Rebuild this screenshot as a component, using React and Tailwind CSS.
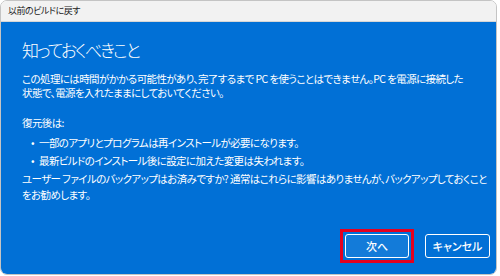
import React from 'react';

const jp = "font-['Noto_Sans_CJK_JP','Noto_Sans',sans-serif] [font-feature-settings:'palt']";

export default function App() {
  return (
    <div className={`w-[500px] h-[276px] bg-white ${jp}`}>
      <div className="w-[497px] h-[275px] flex flex-col border border-[#c4c4c4] rounded-[7px] overflow-hidden">
        <div className="h-[21px] bg-[#f2f2f2] flex items-center pl-[7px] text-[9px] tracking-[-0.5px] text-[#1b1b1b] border-b border-[#d6d6d6]">
          以前のビルドに戻す
        </div>
        <div className="flex-1 bg-[#0170d6] text-white pl-[21px] pr-[6px] flex flex-col text-[10.5px] tracking-[-0.6px] whitespace-nowrap">
          <h1 className="mt-[16px] text-[17px] leading-[24px] font-light tracking-[-2px]">知っておくべきこと</h1>
          <p className="mt-[10px] leading-[14px]">
            この処理には時間がかかる可能性があり、完了するまで PC を使うことはできません。PC を電源に接続した<br />
            状態で、電源を入れたままにしておいてください。
          </p>
          <p className="mt-[16px] leading-[14px]">復元後は:</p>
          <ul className="mt-[4px] leading-[18px] pl-[9px]">
            <li className="flex gap-[5px]"><span>•</span><span>一部のアプリとプログラムは再インストールが必要になります。</span></li>
            <li className="flex gap-[5px]"><span>•</span><span>最新ビルドのインストール後に設定に加えた変更は失われます。</span></li>
          </ul>
          <p className="mt-[1px] leading-[16px]">
            ユーザー ファイルのバックアップはお済みですか? 通常はこれらに影響はありませんが、バックアップしておくこと<br />
            をお勧めします。
          </p>
          <div className="mt-auto mb-[16px] flex justify-end gap-[16px] tracking-normal">
            <div className="relative">
              <button className="w-[64px] h-[24px] rounded-[3px] border border-white bg-[#137bd9] text-[11px] font-medium text-white">次へ</button>
              <div className="absolute -inset-[5px] border-[3px] border-[#e5001e]"></div>
            </div>
            <button className="w-[65px] h-[24px] rounded-[3px] border border-white bg-[#0170d6] text-[11px] font-medium text-white">キャンセル</button>
          </div>
        </div>
      </div>
    </div>
  );
}
